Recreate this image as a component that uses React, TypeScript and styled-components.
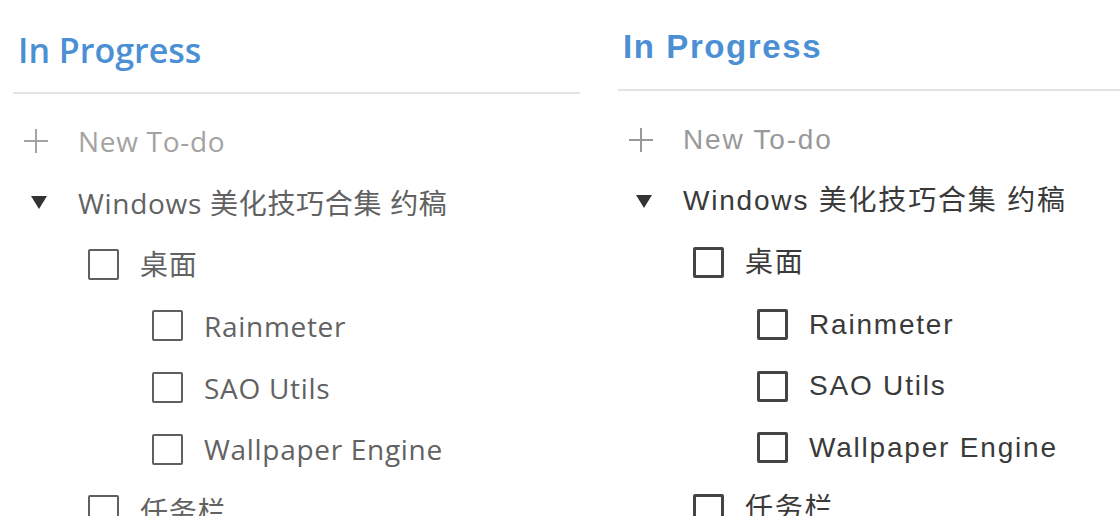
import React from "react";
import styled, { createGlobalStyle } from "styled-components";

interface Item {
  kind: "new" | "group" | "task";
  level: number;
  label: string;
}

interface Skin {
  font: string;
  titleSize: number;
  titleWeight: number;
  titleTop: number;
  titleBlock: number;
  titleSpacing: number;
  listTop: number;
  bodySize: number;
  spacing: number;
  text: string;
  muted: string;
  box: string;
  boxBorder: number;
  rowHeight: number;
  width: number;
}

const items: Item[] = [
  { kind: "new", level: 0, label: "New To-do" },
  { kind: "group", level: 0, label: "Windows 美化技巧合集 约稿" },
  { kind: "task", level: 1, label: "桌面" },
  { kind: "task", level: 2, label: "Rainmeter" },
  { kind: "task", level: 2, label: "SAO Utils" },
  { kind: "task", level: 2, label: "Wallpaper Engine" },
  { kind: "task", level: 1, label: "任务栏" },
];

// 左边是 Windows 的渲染，右边是 macOS 的渲染
const windowsSkin: Skin = {
  font: '"Open Sans", "Noto Sans CJK SC", sans-serif',
  titleSize: 34,
  titleWeight: 600,
  titleTop: 30,
  titleBlock: 92,
  titleSpacing: 0,
  listTop: 16,
  bodySize: 28,
  spacing: 0.7,
  text: "#626262",
  muted: "#a3a3a3",
  box: "#5f5f5f",
  boxBorder: 2.5,
  rowHeight: 61.7,
  width: 567,
};

const macSkin: Skin = {
  font: '"Liberation Sans", "Noto Sans CJK SC", sans-serif',
  titleSize: 33,
  titleWeight: 700,
  titleTop: 27,
  titleBlock: 89,
  titleSpacing: 1.6,
  listTop: 18,
  bodySize: 28,
  spacing: 1.8,
  text: "#3a3a3a",
  muted: "#999999",
  box: "#444444",
  boxBorder: 3,
  rowHeight: 61.6,
  width: 540,
};

function PlusIcon({ color }: { color: string }) {
  return (
    <svg width="26" height="26" viewBox="0 0 26 26">
      <line x1="1" y1="13" x2="25" y2="13" stroke={color} strokeWidth="2" />
      <line x1="13" y1="1" x2="13" y2="25" stroke={color} strokeWidth="2" />
    </svg>
  );
}

function TriangleIcon() {
  return (
    <svg width="16" height="13" viewBox="0 0 16 13">
      <polygon points="0,0 16,0 8,13" fill="#333" />
    </svg>
  );
}

function TodoPanel({ skin }: { skin: Skin }) {
  return (
    <Panel $skin={skin}>
      <Title $skin={skin}>In Progress</Title>
      <Divider />
      <List $top={skin.listTop}>
        {items.map((item, index) => (
          <Row key={index} $height={skin.rowHeight} $level={item.level}>
            {item.kind === "new" && (
              <Marker>
                <PlusIcon color={skin.muted} />
              </Marker>
            )}
            {item.kind === "group" && (
              <Marker $shift={6}>
                <TriangleIcon />
              </Marker>
            )}
            {item.kind === "task" && (
              <CheckBox $color={skin.box} $border={skin.boxBorder} />
            )}
            <Label $color={item.kind === "new" ? skin.muted : skin.text}>
              {item.label}
            </Label>
          </Row>
        ))}
      </List>
    </Panel>
  );
}

export default function App() {
  return (
    <>
      <GlobalStyle />
      <Page>
        <TodoPanel skin={windowsSkin} />
        <TodoPanel skin={macSkin} />
      </Page>
    </>
  );
}

const GlobalStyle = createGlobalStyle`
  html, body {
    margin: 0;
    padding: 0;
    background: #ffffff;
    overflow: hidden;
  }
`;

const Page = styled.div`
  display: flex;
  align-items: flex-start;
  gap: 38px;
  width: 1120px;
  height: 516px;
  padding-left: 13px;
  box-sizing: border-box;
  overflow: hidden;
`;

const Panel = styled.div<{ $skin: Skin }>`
  flex: none;
  width: ${(p) => p.$skin.width}px;
  font-family: ${(p) => p.$skin.font};
  font-size: ${(p) => p.$skin.bodySize}px;
  letter-spacing: ${(p) => p.$skin.spacing}px;
`;

const Title = styled.h1<{ $skin: Skin }>`
  margin: 0;
  box-sizing: border-box;
  height: ${(p) => p.$skin.titleBlock}px;
  padding: ${(p) => p.$skin.titleTop}px 0 0 5px;
  font-size: ${(p) => p.$skin.titleSize}px;
  font-weight: ${(p) => p.$skin.titleWeight};
  letter-spacing: ${(p) => p.$skin.titleSpacing}px;
  color: #4b8fd4;
  line-height: 1.2;
`;

const Divider = styled.div`
  height: 2px;
  background-color: #e3e3e3;
`;

const List = styled.div<{ $top: number }>`
  display: flex;
  flex-direction: column;
  padding-top: ${(p) => p.$top}px;
`;

const Row = styled.div<{ $height: number; $level: number }>`
  display: flex;
  align-items: center;
  height: ${(p) => p.$height}px;
  padding-left: ${(p) => (p.$level === 0 ? 0 : p.$level * 64 + 11)}px;
  white-space: nowrap;
`;

const Marker = styled.div<{ $shift?: number }>`
  display: flex;
  align-items: center;
  justify-content: center;
  width: 46px;
  margin-right: 19px;
  padding-left: ${(p) => p.$shift ?? 0}px;
  box-sizing: border-box;
`;

const CheckBox = styled.div<{ $color: string; $border: number }>`
  flex: none;
  width: 31px;
  height: 31px;
  margin-right: 21px;
  border: ${(p) => p.$border}px solid ${(p) => p.$color};
  border-radius: 2px;
  box-sizing: border-box;
`;

const Label = styled.span<{ $color: string }>`
  color: ${(p) => p.$color};
  line-height: 1;
`;
